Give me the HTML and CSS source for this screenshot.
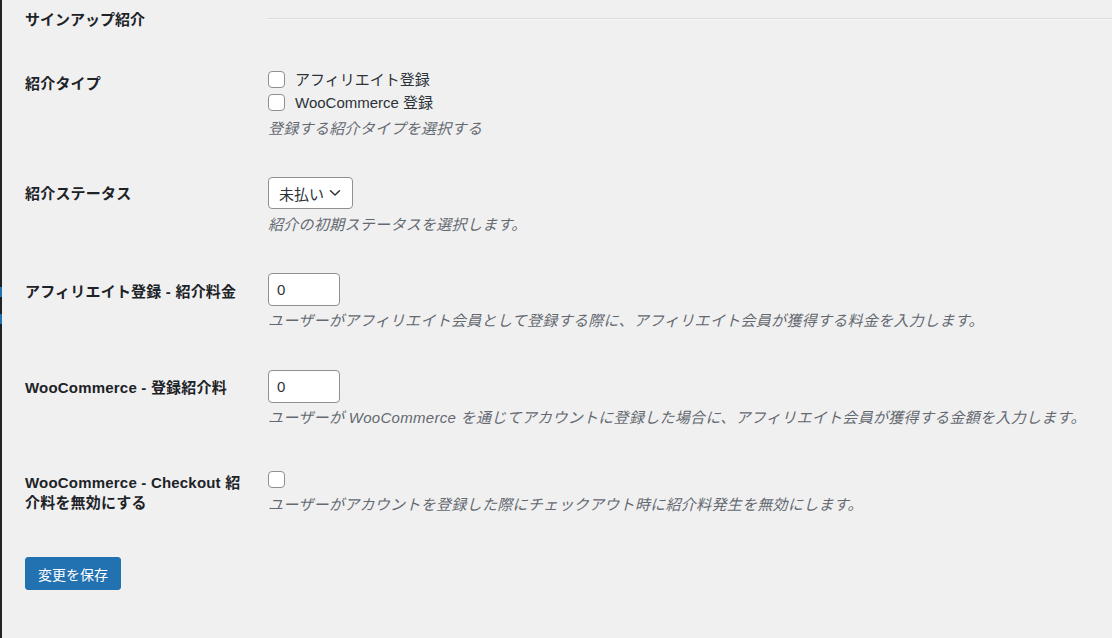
FILE: index.html
```html
<!DOCTYPE html>
<html lang="ja">
<head>
<meta charset="utf-8">
<title>サインアップ紹介</title>
<link rel="stylesheet" href="styles.css">
</head>
<body>
<div class="page">
  <div class="menu-edge"></div>
  <main class="content">
    <div class="section-head">
      <h2 class="section-title">サインアップ紹介</h2>
      <div class="section-rule"></div>
    </div>

    <div class="row row-type">
      <div class="th">紹介タイプ</div>
      <div class="td">
        <label class="check-line"><span class="checkbox"></span>アフィリエイト登録</label>
        <label class="check-line"><span class="checkbox"></span>WooCommerce 登録</label>
        <p class="desc desc-type">登録する紹介タイプを選択する</p>
      </div>
    </div>

    <div class="row row-status">
      <div class="th">紹介ステータス</div>
      <div class="td">
        <div class="select">
          <span>未払い</span>
          <svg class="chev" width="12" height="8" viewBox="0 0 12 8"><path d="M1.5 1.8 L6 6 L10.5 1.8" fill="none" stroke="#2c3338" stroke-width="1.5" stroke-linecap="round" stroke-linejoin="round"/></svg>
        </div>
        <p class="desc desc-status">紹介の初期ステータスを選択します。</p>
      </div>
    </div>

    <div class="row row-aff">
      <div class="th">アフィリエイト登録 - 紹介料金</div>
      <div class="td">
        <div class="input">0</div>
        <p class="desc desc-input">ユーザーがアフィリエイト会員として登録する際に、アフィリエイト会員が獲得する料金を入力します。</p>
      </div>
    </div>

    <div class="row row-woo">
      <div class="th">WooCommerce - 登録紹介料</div>
      <div class="td">
        <div class="input">0</div>
        <p class="desc desc-input">ユーザーが WooCommerce を通じてアカウントに登録した場合に、アフィリエイト会員が獲得する金額を入力します。</p>
      </div>
    </div>

    <div class="row row-checkout">
      <div class="th">WooCommerce - Checkout 紹介料を無効にする</div>
      <div class="td">
        <span class="checkbox checkbox-solo"></span>
        <p class="desc desc-checkout">ユーザーがアカウントを登録した際にチェックアウト時に紹介料発生を無効にします。</p>
      </div>
    </div>

    <button class="save" type="button">変更を保存</button>
  </main>
</div>
</body>
</html>
```

FILE: styles.css
```css
html, body {
  margin: 0;
  padding: 0;
  background: #f0f0f1;
}
body {
  font-family: "Liberation Sans", "Noto Sans CJK JP", sans-serif;
  font-size: 15px;
  color: #1d2327;
}
.page {
  display: flex;
  min-height: 638px;
}
.menu-edge {
  width: 2px;
  flex: none;
  background: linear-gradient(to bottom,
    #1d2327 0, #1d2327 287px,
    #2271b1 287px, #2271b1 297px,
    #1d2327 297px, #1d2327 314px,
    #2271b1 314px, #2271b1 324px,
    #1d2327 324px, #1d2327 100%);
}
.content {
  flex: 1;
  padding-left: 23px;
  display: flex;
  flex-direction: column;
  align-items: flex-start;
}
.section-head {
  display: flex;
  align-items: flex-start;
  align-self: stretch;
  padding-top: 10px;
}
.section-title {
  width: 242px;
  flex: none;
  margin: 0;
  font-size: 15px;
  line-height: 20px;
  font-weight: 700;
}
.section-rule {
  flex: 1;
  margin-top: 8px;
  border-top: 1px solid #dcdcde;
  border-bottom: 1px solid #f6f7f7;
}
.row {
  display: flex;
  align-items: flex-start;
}
.th {
  width: 220px;
  padding-right: 23px;
  flex: none;
  font-weight: 700;
  line-height: 20px;
  letter-spacing: 0.2px;
}
.td {
  display: flex;
  flex-direction: column;
  align-items: flex-start;
}
.check-line {
  display: flex;
  align-items: center;
  gap: 10px;
  height: 23px;
  line-height: 23px;
  color: #2c3338;
}
.checkbox {
  display: inline-block;
  box-sizing: border-box;
  width: 17px;
  height: 17px;
  border: 1px solid #8c8f94;
  border-radius: 4px;
  background: #fff;
}
.desc {
  margin: 0;
  font-style: italic;
  color: #646970;
  line-height: 21px;
  white-space: nowrap;
  letter-spacing: 0.3px;
}
.row-type .th { padding-top: 44px; }
.row-type .td { padding-top: 38px; }
.desc-type { margin-top: 4px; }

.row-status .th { padding-top: 45px; }
.row-status .td { padding-top: 38px; }
.select {
  box-sizing: border-box;
  width: 85px;
  height: 32px;
  border: 1px solid #8c8f94;
  border-radius: 4px;
  background: #fff;
  display: flex;
  align-items: center;
  justify-content: space-between;
  padding: 0 11px 0 10px;
  color: #2c3338;
}
.chev { display: block; }
.desc-status { margin-top: 5px; }

.input {
  box-sizing: border-box;
  width: 72px;
  height: 33px;
  border: 1px solid #8c8f94;
  border-radius: 4px;
  background: #fff;
  padding: 0 8px;
  line-height: 31px;
  color: #2c3338;
}
.desc-input { margin-top: 4px; }
.row-aff .th { padding-top: 47px; }
.row-aff .td { padding-top: 38px; }
.row-woo .th { padding-top: 47px; }
.row-woo .td { padding-top: 39px; }

.row-checkout .th { padding-top: 45px; }
.row-checkout .td { padding-top: 43px; }
.checkbox-solo { display: block; }
.desc-checkout { margin-top: 6px; }

.save {
  margin-top: 42px;
  width: 96px;
  height: 33px;
  border: 1px solid #2271b1;
  border-radius: 3px;
  background: #2271b1;
  color: #fff;
  font-family: inherit;
  font-size: 14px;
  padding: 0;
  cursor: pointer;
}
```
